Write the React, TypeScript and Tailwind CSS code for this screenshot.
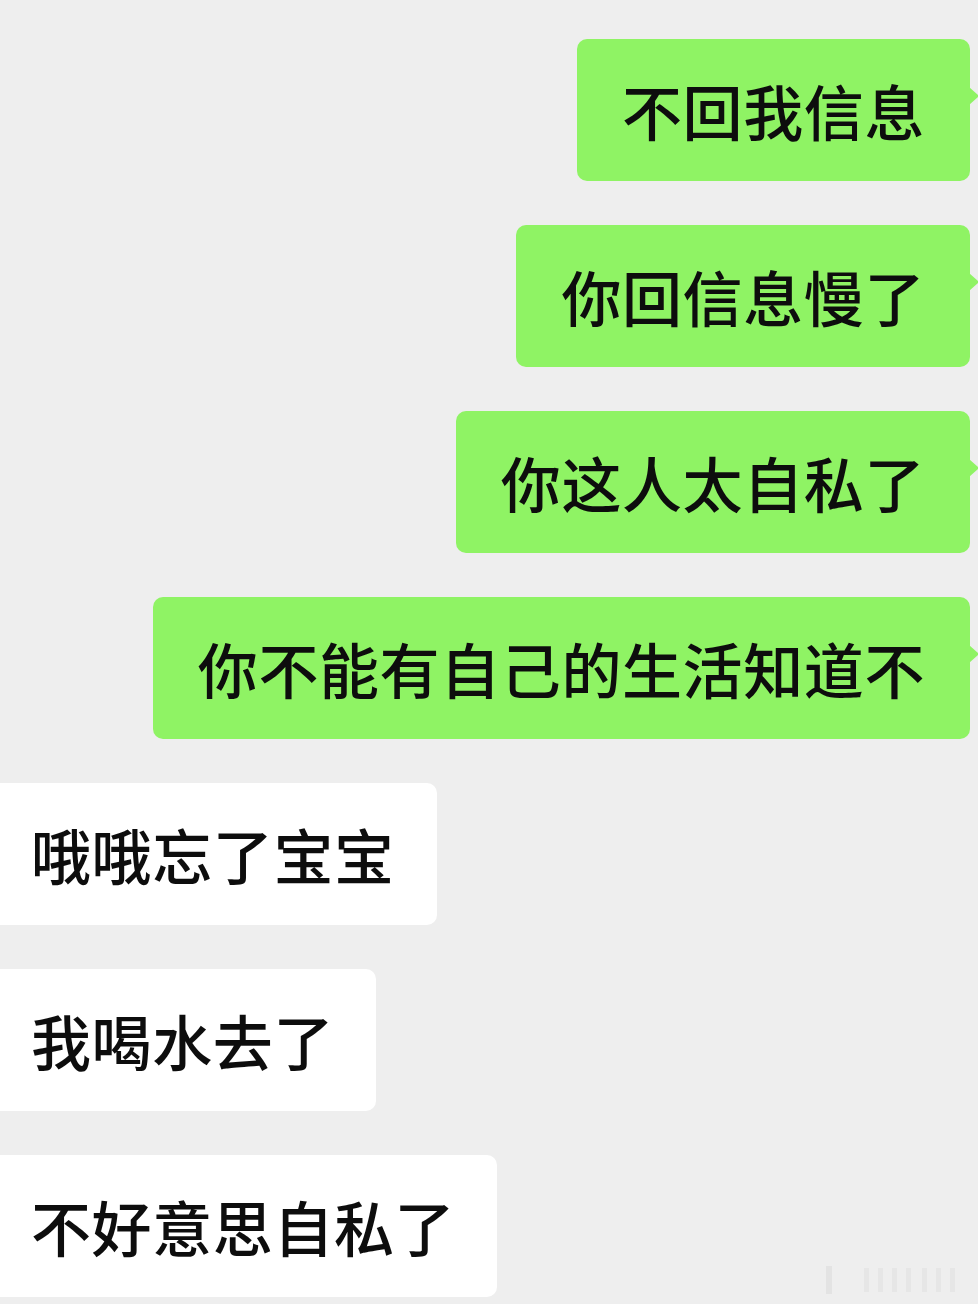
import React from "react";

type Msg = {text: string; mine: boolean};

const messages: Msg[] = [
 {text: "不回我信息", mine: true},
 {text: "你回信息慢了", mine: true},
 {text: "你这人太自私了", mine: true},
 {text: "你不能有自己的生活知道不", mine: true},
 {text: "哦哦忘了宝宝", mine: false},
 {text: "我喝水去了", mine: false},
 {text: "不好意思自私了", mine: false},
];

const Bubble = ({text, mine}: Msg) => {
 if (mine) {
  return (
   <div className="flex justify-end pr-2">
    <div className="relative rounded-[10px] bg-[#8ff364] px-[45px] py-[41px] text-[60px] font-medium leading-[60px] tracking-[0.6px] text-[#0d0d0d]">
     {text}
     {/* tail */}
     <span className="absolute -right-[9px] top-[48px] h-0 w-0 border-y-[9px] border-l-[10px] border-y-transparent border-l-[#8ff364]" />
    </div>
   </div>
  );
 }

 return (
  <div className="flex justify-start">
   <div className="-ml-[15px] rounded-[10px] bg-white py-[41px] pl-[46px] pr-[42px] text-[60px] font-medium leading-[60px] tracking-[0.6px] text-[#0d0d0d]">
    {text}
   </div>
  </div>
 );
};

export default function App() {
 return (
  <div
   className="relative h-[1304px] w-[978px] overflow-hidden bg-[#eeeeee]"
   style={{fontFamily: '"Noto Sans CJK SC", "Noto Sans", sans-serif'}}>
   <div className="flex flex-col gap-[44px] pt-[39px]">
    {messages.map((m, i) => (
     <Bubble key={i} {...m} />
    ))}
   </div>

   {/* faint watermark */}
   <svg
    className="absolute bottom-[8px] right-[12px] opacity-10"
    width="140"
    height="36"
    viewBox="0 0 140 36">
    <rect x="0" y="6" width="6" height="28" fill="#888" />
    <rect x="38" y="8" width="5" height="24" fill="#aaa" />
    <rect x="52" y="8" width="5" height="24" fill="#aaa" />
    <rect x="66" y="8" width="5" height="24" fill="#aaa" />
    <rect x="80" y="8" width="5" height="24" fill="#aaa" />
    <rect x="96" y="8" width="5" height="24" fill="#aaa" />
    <rect x="110" y="8" width="5" height="24" fill="#aaa" />
    <rect x="124" y="8" width="5" height="24" fill="#aaa" />
   </svg>
  </div>
 );
}
